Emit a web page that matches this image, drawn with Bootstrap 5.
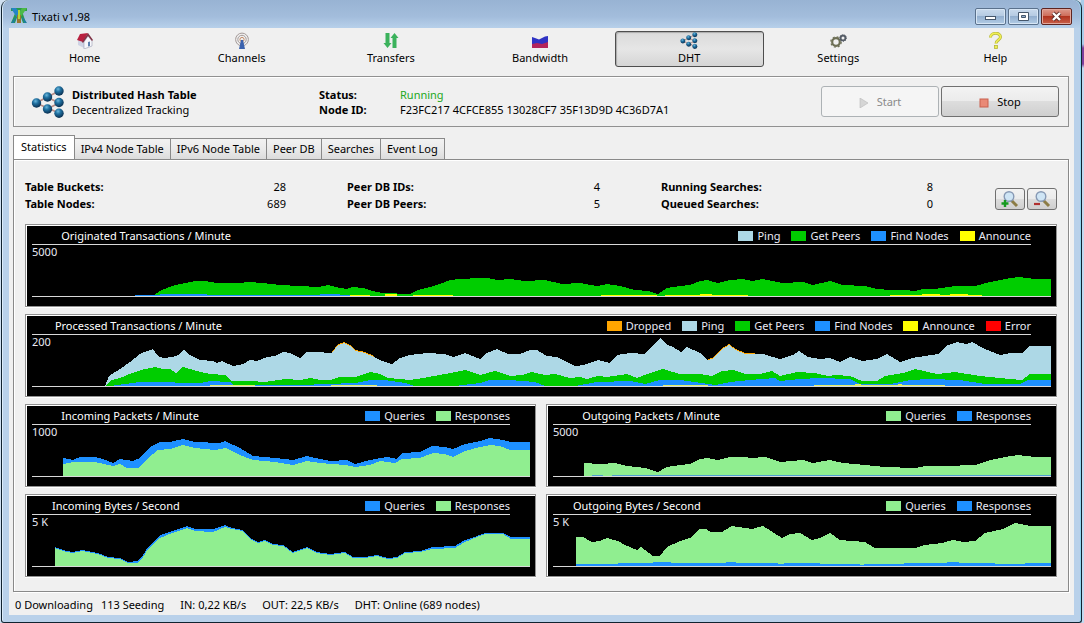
<!DOCTYPE html>
<html lang="en">
<head>
<meta charset="utf-8">
<meta name="viewport" content="width=device-width, initial-scale=1">
<title>Tixati v1.98</title>
<link href="https://cdn.jsdelivr.net/npm/bootstrap@5.3.0/dist/css/bootstrap.min.css" rel="stylesheet">
<style>
  :root { --face: #f0f0f0; --line: #919191; --frame: #b9d1ea; }
  body {
    font-family: "Noto Sans", "Open Sans", sans-serif; font-size: 11px; line-height: 15px; color: #000;
    background: linear-gradient(#a9cdea 0 44px, #7d3f9d 48px 64px, #c3daf0 68px 100%) right / 3px 100% no-repeat, #cfdff0;
    padding: 0 2px 1px 1px;
  }
  button { color: inherit; padding: 0; }
  .app-window { border: 1px solid #10222f; border-top: 0; border-radius: 8px 8px 3px 3px; background: var(--frame); padding: 0 7px 7px 7px; min-height: calc(100vh - 1px); box-shadow: inset 1px 0 #dcecfa, inset -1px 0 #8fd3ee; }
  .title-bar { height: 28px; margin: 0 -6px; padding: 7px 8px 0 3px; background: linear-gradient(#98b3d3, #a3bddc 60%, #b7d0ea); border-radius: 8px 8px 0 0; }
  .title-bar > svg { width: 18px; height: 18px; margin-right: 4px; }
  .title-bar > span { padding-top: 2px; }
  .win-btn { width: 31px; height: 17px; margin-top: 1px; border: 1px solid #5a718c; border-radius: 2px; background: linear-gradient(#c9daed, #b4cae2 48%, #93afcf 50%, #b3cde6); box-shadow: inset 0 0 0 1px #d7e6f5; }
  .btn-set { gap: 2px; }
  .win-btn.win-close { border-color: #5e2420; background: linear-gradient(#dc9a8d, #cd6a58 48%, #b13420 50%, #c9604a); box-shadow: inset 0 0 0 1px #e2a79c; }
  .win-btn svg { width: 15px; height: 11px; }
  .client { background: var(--face); flex: 1 0 auto; }
  .tool-strip { padding: 3px 4px 9px 1px; }
  .tool-btn { height: 36px; border: 1px solid transparent; border-radius: 3px; background: none; line-height: 15px; }
  .tool-btn svg { width: 18px; height: 17px; margin-bottom: 1px; flex: none; }
  .tool-btn.active { border-color: #4e4e4e; background: linear-gradient(#dadada, #e6e6e6 50%, #d5d5d5); box-shadow: inset 1px 1px 1px #aaa; }
  .info-panel { margin: 0 5px 9px 4px; border: 1px solid var(--line); box-shadow: inset 1px 1px #fff; height: 51px; padding: 0 9px 0 17px; }
  .info-panel > svg { width: 34px; height: 32px; margin-right: 7px; }
  .info-panel dl { display: grid; grid-template-columns: 81px auto; margin: 0; }
  .info-id { width: 247px; }
  .info-panel dd, .info-panel dt, .figures dd, .figures dt { margin: 0; }
  .running { color: #22a822; }
  .cmd-btn { width: 118px; height: 31px; margin-left: 2px; border: 1px solid #707070; border-radius: 3px; background: linear-gradient(#f3f3f3, #ebebeb 48%, #dddddd 50%, #cfcfcf); }
  .cmd-btn:disabled { color: #8a8a8a; border-color: #adb2b5; background: #f5f5f5; }
  .cmd-btn svg { width: 10px; height: 10px; margin-right: 8px; }
  .tab-strip { margin: 0 5px 0 4px; height: 23px; border: 0; }
  .tab-strip .tab-btn { height: 21px; border: 1px solid #898989; border-left-width: 0; border-bottom: 0; background: linear-gradient(#f2f2f2, #eaeaea 50%, #dcdcdc); padding: 0 6px 1px; }
  .tab-strip .tab-btn.active { height: 24px; border-left-width: 1px; background: #fff; padding: 0 7px 3px; position: relative; z-index: 1; }
  .tab-pane-box { margin: 0 5px 0 4px; border: 1px solid #898989; padding: 18px 11px 14px; box-shadow: inset 1px 1px #fff, 1px 1px #fff; }
  .figures { display: grid; grid-template-columns: 261fr 253fr 272fr; column-gap: 61px; margin-right: 62px; line-height: 17px; }
  .figures dl { display: grid; grid-template-columns: 1fr auto; margin: 0; }
  .figures dd { text-align: right; }
  .zoom-btn { width: 30px; height: 22px; margin-bottom: 2px; border: 1px solid #707070; border-radius: 3px; background: linear-gradient(#f2f2f2, #ebebeb 48%, #dddddd 50%, #cfcfcf); }
  .zoom-btn svg { width: 18px; height: 18px; }
  .zoom-set { gap: 2px; }
  .charts { display: grid; grid-template-columns: 1fr 1fr; gap: 7px 10px; margin-top: 12px; }
  .chart-wide { grid-column: span 2; }
  .chart-box { border: 1px solid var(--line); background: #000; color: #e9e9f4; box-shadow: inset 1px 1px #fff, 0 1px #fff; padding: 1px 5px 9px 6px; display: grid; grid-template-columns: auto 1fr; grid-template-rows: 19px 52px; }
  .chart-rule { grid-area: 1 / 1 / 2 / 3; border-bottom: 1px solid #d8d8d8; margin-right: 20px; }
  .chart-head { grid-area: 1 / 2; margin: 0 20px 0 4px; padding-top: 2px; }
  .chart-head h2 { font-size: 11px; line-height: 15px; font-weight: 400; margin: 0; color: #fff; }
  .chart-scale { grid-area: 2 / 1; z-index: 1; line-height: 14px; }
  .plot { grid-area: 2 / 1 / 3 / 3; width: 100%; height: 52px; display: block; shape-rendering: crispEdges; border-bottom: 1px solid #d8d8d8; }
  .legend-list { gap: 11px; margin: 0; }
  .legend-list li { display: flex; align-items: center; gap: 4px; }
  .legend-list li::before { content: ""; width: 15px; height: 10px; background: var(--c); }
  .k-ping { --c: #add8e6; } .k-get { --c: #00cd00; } .k-find { --c: #1e90ff; } .k-ann { --c: #ffff00; }
  .k-drop { --c: #ffa500; } .k-err { --c: #ff0000; } .k-light { --c: #90ee90; }
  .plot [class^="k-"] { fill: var(--c); }
  .status-line { padding: 5px 6px 3px; }
</style>
</head>
<body>
<div class="app-window d-flex flex-column">
  <header class="title-bar d-flex align-items-start">
    <svg viewBox="0 0 18 18" class="ms-1"><path d="M1 1h16v3h-5l4 12h-3L9 5 5 16H1L6 4H1z" fill="#2a9c48"/><path d="M1 1h5l4 5-3 5z" fill="#2584c4"/><path d="M17 1h-5L8 7l2 4z" fill="#4cb848"/><path d="M7 8h4v8H7z" fill="#99752e"/><path d="M1 16l4-6 1 1-2 5zM17 16l-4-6-1 1 2 5z" fill="#1d7f9b"/><path d="M8 3h2v9H8z" fill="#b7d236"/></svg>
    <span class="flex-grow-1">Tixati v1.98</span>
    <div class="btn-set d-flex" role="group" aria-label="Window">
      <button class="win-btn d-flex align-items-center justify-content-center" type="button" aria-label="Minimize"><svg viewBox="0 0 15 11"><rect x="2.5" y="5.500" width="10" height="3" fill="#fff" stroke="#45566b"/></svg></button>
      <button class="win-btn d-flex align-items-center justify-content-center" type="button" aria-label="Maximize"><svg viewBox="0 0 15 11"><path d="M2.500 1.500h10v8h-10zM5.500 4.500h4v2h-4z" fill="#fff" fill-rule="evenodd" stroke="#45566b"/></svg></button>
      <button class="win-btn win-close d-flex align-items-center justify-content-center" type="button" aria-label="Close"><svg viewBox="0 0 15 11"><path d="M4 2l7 7M11 2L4 9" stroke="#5c2a28" stroke-width="4"/><path d="M4 2l7 7M11 2L4 9" stroke="#fff" stroke-width="2.400"/></svg></button>
    </div>
  </header>

  <main class="client">
    <nav class="tool-strip d-flex" aria-label="Main">
      <button type="button" class="tool-btn flex-fill w-100 me-2 d-flex flex-column align-items-center"><svg viewBox="0 0 18 17"><path d="M2 8l6 2v6l-6-3z" fill="#cfd3e4"/><path d="M8 10l4-6 4 5v5l-8 3z" fill="#f7f7fb" stroke="#9a9db4" stroke-width=".6"/><path d="M1 8l3-6 8-1-5 9z" fill="#b8203f"/><path d="M12 1l5 7-1 1-4-5-5 7-1-1z" fill="#7f3245"/><path d="M12 10l2-.5V14l-2 .6z" fill="#5d7fae"/></svg>Home</button>
      <button type="button" class="tool-btn flex-fill w-100 d-flex flex-column align-items-center"><svg viewBox="0 0 18 17" fill="none" stroke="#a49a98"><circle cx="9" cy="7.500" r="6.400"/><circle cx="9" cy="7.500" r="4.200"/><circle cx="9" cy="7.500" r="2.100" stroke="#c58b67"/><path d="M8 8h2l2 9H6z" fill="#3b62ad" stroke="none"/></svg>Channels</button>
      <button type="button" class="tool-btn flex-fill w-100 d-flex flex-column align-items-center"><svg viewBox="0 0 18 17" fill="#3bb25c"><path d="M3.500 1h4v10h2l-4 5-4-5h2zM10.500 16h4V6h2l-4-5-4 5h2z"/></svg>Transfers</button>
      <button type="button" class="tool-btn flex-fill w-100 d-flex flex-column align-items-center"><svg viewBox="0 0 18 17"><path d="M1 5l3 1 4 1.500 3-1.500 3-1.500 3-.5v11H1z" fill="#2f33c4"/><path d="M1 12l5-1 5 1 6-2v6H1z" fill="#b3245c"/></svg>Bandwidth</button>
      <button type="button" class="tool-btn active flex-fill w-100 d-flex flex-column align-items-center" aria-current="page"><svg viewBox="0 0 32 32"><use href="#nodes"/></svg>DHT</button>
      <button type="button" class="tool-btn flex-fill w-100 d-flex flex-column align-items-center"><svg viewBox="0 0 18 17" fill="none"><circle cx="7" cy="10" r="3.800" stroke="#6d6f55" stroke-width="2.200"/><circle cx="7" cy="10" r="5.200" stroke="#6d6f55" stroke-width="1.200" stroke-dasharray="2 2.100"/><circle cx="14" cy="6" r="2.400" stroke="#555c66" stroke-width="1.800"/><circle cx="14" cy="6" r="3.500" stroke="#555c66" stroke-dasharray="1 1.200"/></svg>Settings</button>
      <button type="button" class="tool-btn flex-fill w-100 ms-2 d-flex flex-column align-items-center"><svg viewBox="0 0 18 17" fill="none"><path d="M4.500 5.500C4.500 0 14.500 0 14.500 5c0 3-4.500 3-4.500 6.500" stroke="#b5b73a" stroke-width="3"/><path d="M4.500 5.500C4.500 0 14.500 0 14.500 5c0 3-4.500 3-4.500 6.500" stroke="#f0ee54" stroke-width="1.600"/><rect x="8.500" y="13.500" width="3" height="3" fill="#f0ee54" stroke="#b5b73a" stroke-width=".8"/></svg>Help</button>
    </nav>

    <section class="info-panel d-flex align-items-center">
      <svg viewBox="0 0 32 32">
        <defs>
          <radialGradient id="ball" cx=".4" cy=".3" r=".7"><stop offset="0" stop-color="#6cb8dc"/><stop offset=".4" stop-color="#2070a0"/><stop offset="1" stop-color="#0a2f50"/></radialGradient>
          <g id="nodes"><path d="M27 5L4 17l23 10M15 11l12 6-12 6" fill="none" stroke="#b98d86" stroke-width="1.800"/><g fill="url(#ball)"><circle cx="27" cy="5" r="4.700"/><circle cx="15.500" cy="11" r="4.700"/><circle cx="4.500" cy="17" r="4.700"/><circle cx="27" cy="16.500" r="4.700"/><circle cx="15.500" cy="23" r="4.700"/><circle cx="27" cy="27.200" r="4.700"/></g></g>
        </defs><use href="#nodes"/></svg>
      <div class="info-id"><strong>Distributed Hash Table</strong><br>Decentralized Tracking</div>
      <dl><dt>Status:</dt><dd class="running">Running</dd><dt>Node ID:</dt><dd>F23FC217 4CFCE855 13028CF7 35F13D9D 4C36D7A1</dd></dl>
      <button type="button" class="cmd-btn ms-auto" disabled><svg viewBox="0 0 10 10"><path d="M1 0l8 5-8 5z" fill="#d6d6d6" stroke="#bbb" stroke-width=".6"/></svg>Start</button>
      <button type="button" class="cmd-btn"><svg viewBox="0 0 10 10"><rect x="1" y="1" width="8" height="8" fill="#e98a77" stroke="#c9614f"/></svg>Stop</button>
    </section>

    <div class="tab-strip d-flex align-items-end" role="tablist">
      <button type="button" role="tab" class="tab-btn active" aria-selected="true">Statistics</button>
      <button type="button" role="tab" class="tab-btn">IPv4 Node Table</button>
      <button type="button" role="tab" class="tab-btn">IPv6 Node Table</button>
      <button type="button" role="tab" class="tab-btn">Peer DB</button>
      <button type="button" role="tab" class="tab-btn">Searches</button>
      <button type="button" role="tab" class="tab-btn">Event Log</button>
    </div>

    <section class="tab-pane-box">
      <div class="d-flex align-items-end">
        <div class="figures flex-grow-1">
          <dl><dt>Table Buckets:</dt><dd>28</dd><dt>Table Nodes:</dt><dd>689</dd></dl>
          <dl><dt>Peer DB IDs:</dt><dd>4</dd><dt>Peer DB Peers:</dt><dd>5</dd></dl>
          <dl><dt>Running Searches:</dt><dd>8</dd><dt>Queued Searches:</dt><dd>0</dd></dl>
        </div>
        <div class="zoom-set d-flex">
          <button type="button" class="zoom-btn d-flex align-items-center justify-content-center" aria-label="Zoom in"><svg viewBox="0 0 18 18"><path d="M10 10l6 6" stroke="#8c7c45" stroke-width="3"/><circle cx="8" cy="6.500" r="4.800" fill="#cfe5f5" stroke="#8799b4" stroke-width="1.400"/><path d="M4 10v7M.500 13.500h7" stroke="#169a20" stroke-width="2.400"/></svg></button>
          <button type="button" class="zoom-btn d-flex align-items-center justify-content-center" aria-label="Zoom out"><svg viewBox="0 0 18 18"><path d="M10 10l6 6" stroke="#8c7c45" stroke-width="3"/><circle cx="8" cy="6.500" r="4.800" fill="#cfe5f5" stroke="#8799b4" stroke-width="1.400"/><path d="M1 14h6" stroke="#b03030" stroke-width="2.200"/></svg></button>
        </div>
      </div>

      <div class="charts">
        <article class="chart-box chart-wide">
          <div class="chart-rule"></div>
          <div class="chart-head d-flex justify-content-between align-items-start"><h2>Originated Transactions / Minute</h2>
            <ul class="legend-list list-unstyled d-flex"><li class="k-ping">Ping</li><li class="k-get">Get Peers</li><li class="k-find">Find Nodes</li><li class="k-ann">Announce</li></ul></div>
          <span class="chart-scale">5000</span>
          <svg class="plot" viewBox="32 245 1019 51" preserveAspectRatio="none">
            <path class="k-get" d="M153 296L160 291 167 288 175 285 185 283 195 281 205 281 217 283 237 283 250 282 262 283 280 285 300 286 318 287 328 285 340 288 347 289 352 287 363 288 372 291 383 293 410 294 418 290 430 287 440 284 450 280 460 279 480 278 488 278 497 280 510 279 525 281 545 280 562 284 580 283 597 286 607 284 620 286 635 290 648 291 658 294 667 288 680 286 690 285 700 281 707 280 718 283 730 280 743 279 752 281 763 279 772 281 783 283 803 282 813 285 830 281 843 285 865 286 877 289 890 290 905 290 915 291 923 289 935 289 955 286 975 286 990 282 1005 279 1018 277 1027 278 1035 279 1051 279V296z"/>
            <path class="k-find" d="M135 295h18l14-1h40v1h113v-1h20v1h10v1H135z"/>
            <path class="k-ann" d="M350 295h20v1h-20zM385 294h12v2h-12zM413 295h40v1h-40zM601 295h56v1h-56zM665 295h83v1h-83zM700 294h12v1h-12zM890 295h92v1h-92zM922 294h18v1h-18zM950 294h18v1h-18z"/>
          </svg>
        </article>

        <article class="chart-box chart-wide">
          <div class="chart-rule"></div>
          <div class="chart-head d-flex justify-content-between align-items-start"><h2>Processed Transactions / Minute</h2>
            <ul class="legend-list list-unstyled d-flex"><li class="k-drop">Dropped</li><li class="k-ping">Ping</li><li class="k-get">Get Peers</li><li class="k-find">Find Nodes</li><li class="k-ann">Announce</li><li class="k-err">Error</li></ul></div>
          <span class="chart-scale">200</span>
          <svg class="plot" viewBox="32 335 1019 51" preserveAspectRatio="none">
            <path class="k-drop" d="M332 386V352L338 344 344 342 350 345 356 350 365 352 374 356V386zM708 386V359L714 357 721 349 729 344 736 349 745 353 755 353V386z"/>
            <path class="k-ping" d="M105 386L109 376 112 374 120 369 130 362 140 354 147 351 153 349 158 356 163 358 173 357 178 355 184 350 190 355 200 360 213 361 217 363 222 361 233 366 243 364 250 360 257 361 267 357 275 356 283 352 290 353 300 358 307 352 315 352 332 353 338 345 344 343 350 346 356 351 365 353 374 357 382 361 392 364 400 358 410 355 427 353 444 354 453 357 465 353 480 359 487 353 497 349 508 354 520 354 530 350 537 350 547 356 557 357 567 362 575 366 584 365 598 360 610 363 617 355 630 353 645 354 652 346 660 338 666 344 673 347 681 352 687 347 700 353 708 360 714 358 721 350 729 345 736 350 745 354 763 354 780 359 793 355 799 351 808 357 820 359 830 358 840 362 850 357 862 361 877 359 887 354 900 362 912 358 925 356 938 354 948 345 957 342 966 344 972 342 985 349 1000 355 1010 353 1022 353 1030 346 1051 346V386z"/>
            <path class="k-get" d="M105 386L112 380 120 378 132 373 145 369 155 367 163 369 170 369 176 373 183 367 197 371 210 374 225 375 232 381 250 381 265 382 285 379 300 380 310 378 320 380 330 380 340 377 355 377 370 372 380 374 388 378 410 380 423 378 445 374 465 370 480 375 495 371 510 376 522 375 532 372 545 375 555 374 570 378 580 377 587 379 598 376 607 377 627 374 637 378 650 373 663 369 680 374 700 374 712 376 722 371 733 370 745 374 760 374 772 371 780 376 797 372 815 373 828 376 835 375 850 376 862 381 877 381 885 376 903 373 915 369 937 374 955 372 980 376 1010 379 1022 380 1030 374 1051 374V386z"/>
            <path class="k-find" d="M110 386L125 384 140 382 165 382 185 383 200 383 210 381 230 382 234 385 300 385 355 383 370 380 385 380 405 383 415 386 455 386 480 383 490 380 510 380 535 382 545 386 575 386 597 382 630 381 645 384 660 380 680 380 695 382 715 385 730 382 750 380 775 378 780 381 800 379 820 378 850 379 860 384 890 384 910 380 930 379 960 380 985 384 1020 384 1028 380 1051 380V386z"/>
            <path d="M210 385h45v1h-45zM331 385h46v1h-46zM663 385h45v1h-45zM814 385h131v1h-131zM855 384h6v1h-6zM898 384h4v1h-4z" fill="#e4ed68"/>
          </svg>
        </article>

        <article class="chart-box">
          <div class="chart-rule"></div>
          <div class="chart-head d-flex justify-content-between align-items-start"><h2>Incoming Packets / Minute</h2>
            <ul class="legend-list list-unstyled d-flex"><li class="k-find">Queries</li><li class="k-light">Responses</li></ul></div>
          <span class="chart-scale">1000</span>
          <svg class="plot" viewBox="32 425 498 51" preserveAspectRatio="none">
            <path class="k-find" d="M63 476V458L73 460 80 457 95 457 103 459 113 463 120 459 133 461 140 458 150 447 160 442 170 442 183 439 195 442 220 443 225 441 240 448 253 456 275 458 293 460 307 456 315 458 330 461 347 460 355 464 370 460 387 457 397 459 402 453 420 452 432 446 445 447 453 449 465 444 480 441 490 438 503 440 511 442 530 442V476z"/>
            <path class="k-light" d="M63 476V464L73 462 95 462 113 466 120 464 127 468 138 468 148 458 158 450 170 449 183 445 195 448 215 450 226 448 240 455 253 460 275 462 293 465 307 461 320 463 345 465 355 467 370 465 380 461 395 463 402 459 420 458 433 453 445 454 453 457 465 451 480 447 490 445 500 446 510 450 530 450V476z"/>
          </svg>
        </article>

        <article class="chart-box">
          <div class="chart-rule"></div>
          <div class="chart-head d-flex justify-content-between align-items-start"><h2>Outgoing Packets / Minute</h2>
            <ul class="legend-list list-unstyled d-flex"><li class="k-light">Queries</li><li class="k-find">Responses</li></ul></div>
          <span class="chart-scale">5000</span>
          <svg class="plot" viewBox="553 425 498 51" preserveAspectRatio="none">
            <path class="k-light" d="M584 476V463L600 464 615 463 627 466 645 468 658 472 667 467 680 465 690 464 700 459 707 458 718 460 730 457 743 457 752 458 765 457 780 462 803 460 813 463 830 460 843 463 865 465 885 467 915 468 925 466 945 466 975 465 990 460 1005 457 1018 455 1035 457 1051 457V476z"/>
            <path fill="#4f9fd0" d="M592 475h11v1h-11zM612 475h439v1H612z"/>
          </svg>
        </article>

        <article class="chart-box">
          <div class="chart-rule"></div>
          <div class="chart-head d-flex justify-content-between align-items-start"><h2>Incoming Bytes / Second</h2>
            <ul class="legend-list list-unstyled d-flex"><li class="k-find">Queries</li><li class="k-light">Responses</li></ul></div>
          <span class="chart-scale">5 K</span>
          <svg class="plot" viewBox="32 515 498 51" preserveAspectRatio="none">
            <path class="k-find" d="M55 566V547L63 550 72 552 82 550 98 553 108 557 120 558 128 562 138 561 143 555 148 547 160 535 172 531 187 526 195 529 213 529 225 525 232 528 242 530 250 538 258 542 265 540 273 544 283 545 293 552 307 547 317 552 330 554 345 552 353 557 365 557 377 555 388 558 397 557 405 552 420 551 432 547 455 546 465 540 477 536 485 533 503 533 511 537 530 537V566z"/>
            <path class="k-light" d="M55 566V548L63 551 72 553 82 551 98 554 108 558 120 559 128 563 138 563 143 557 148 549 160 538 172 533 187 528 195 531 213 532 225 527 232 529 242 531 250 539 258 543 265 541 273 545 283 546 293 553 307 548 317 553 330 555 345 553 353 558 365 558 377 556 388 559 397 558 405 553 420 552 432 549 455 548 465 542 477 537 485 534 503 534 511 539 530 539V566z"/>
          </svg>
        </article>

        <article class="chart-box">
          <div class="chart-rule"></div>
          <div class="chart-head d-flex justify-content-between align-items-start"><h2>Outgoing Bytes / Second</h2>
            <ul class="legend-list list-unstyled d-flex"><li class="k-light">Queries</li><li class="k-find">Responses</li></ul></div>
          <span class="chart-scale">5 K</span>
          <svg class="plot" viewBox="553 515 498 51" preserveAspectRatio="none">
            <path class="k-light" d="M576 566V537L583 537 592 542 600 541 607 538 618 541 625 545 637 550 641 547 649 553 653 556 660 556 667 547 680 541 690 538 700 529 706 529 711 532 722 532 732 526 745 528 752 529 763 526 771 531 782 538 790 534 800 533 812 540 820 538 830 533 840 540 865 542 875 548 915 548 925 545 942 543 953 540 963 542 975 541 985 533 1003 529 1015 523 1030 526 1051 526V566z"/>
            <path class="k-find" d="M576 566v-2h42v-1h35v-1h18v1h55v-1h10v1h42v1h6v-1h36v1h40v1h4v-1h40v-1h43v-1h12v1h36v1h30v-1h26v3z"/>
          </svg>
        </article>
      </div>
    </section>

    <footer class="status-line d-flex"><span>0 Downloading</span><span class="ms-2">113 Seeding</span><span class="ms-3">IN: 0,22 KB/s</span><span class="ms-3">OUT: 22,5 KB/s</span><span class="ms-3">DHT: Online (689 nodes)</span></footer>
  </main>
</div>
<script src="https://cdn.jsdelivr.net/npm/bootstrap@5.3.0/dist/js/bootstrap.bundle.min.js"></script>
</body>
</html>
